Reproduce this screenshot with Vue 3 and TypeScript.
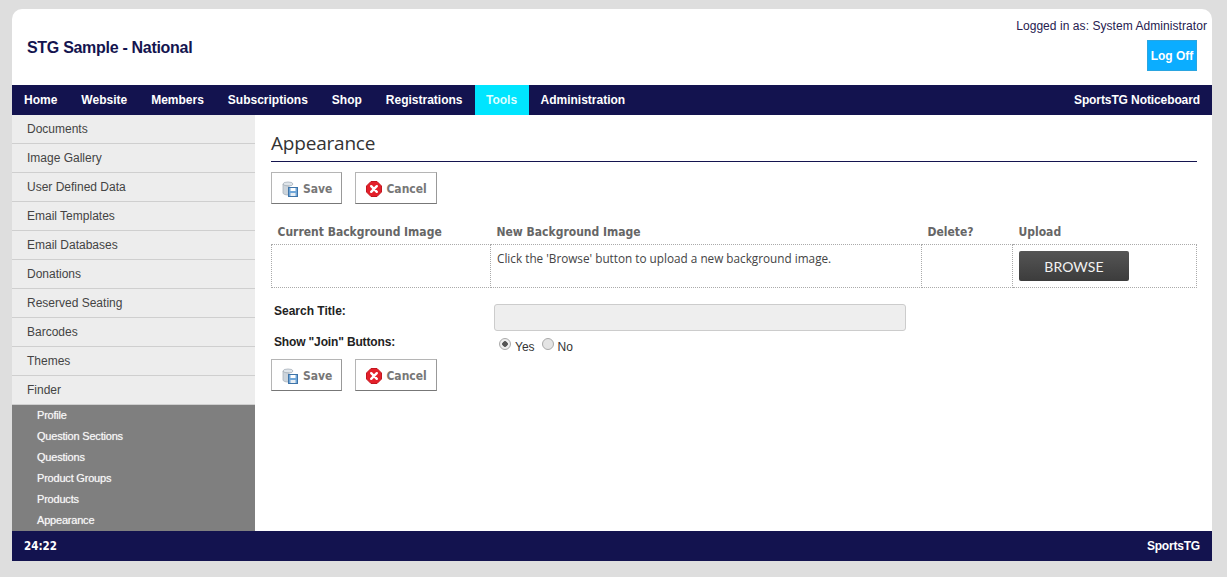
<script setup lang="ts">
const nav = [
  { label: 'Home', active: false },
  { label: 'Website', active: false },
  { label: 'Members', active: false },
  { label: 'Subscriptions', active: false },
  { label: 'Shop', active: false },
  { label: 'Registrations', active: false },
  { label: 'Tools', active: true },
  { label: 'Administration', active: false },
]
const side = ['Documents', 'Image Gallery', 'User Defined Data', 'Email Templates', 'Email Databases', 'Donations', 'Reserved Seating', 'Barcodes', 'Themes', 'Finder']
const sub = ['Profile', 'Question Sections', 'Questions', 'Product Groups', 'Products', 'Appearance']
</script>

<template>
  <div class="shell">
    <header class="top">
      <div class="brand">STG Sample - National</div>
      <div class="user">
        <div class="logged">Logged in as: System Administrator</div>
        <button class="logoff">Log Off</button>
      </div>
    </header>
    <nav class="nav">
      <div class="nav-items">
        <a v-for="n in nav" :key="n.label" class="nav-item" :class="{ active: n.active }">{{ n.label }}</a>
      </div>
      <a class="notice">SportsTG Noticeboard</a>
    </nav>
    <div class="body">
      <aside class="side">
        <a v-for="s in side" :key="s" class="side-item">{{ s }}</a>
        <div class="sub">
          <a v-for="s in sub" :key="s" class="sub-item">{{ s }}</a>
        </div>
      </aside>
      <main class="main">
        <h1 class="title">Appearance</h1>
        <div class="actions">
          <button class="btn">
            <svg class="ico" viewBox="0 0 16 16" width="16" height="16">
              <ellipse cx="6" cy="3" rx="5" ry="2" fill="#dfe5ea" stroke="#aab3bb" stroke-width=".8" />
              <path d="M1 3v9c0 1.100 2.200 2 5 2h1V5c-3 0-6-.9-6-2z" fill="#ccd4db" stroke="#aab3bb" stroke-width=".8" />
              <rect x="6.500" y="6.500" width="9" height="9" fill="#6fa6d8" stroke="#3f74a8" />
              <rect x="8.500" y="7" width="5" height="3" fill="#fff" />
              <rect x="8.500" y="12" width="5" height="3" fill="#e8eef3" />
            </svg>
            Save
          </button>
          <button class="btn cancel">
            <svg class="ico" viewBox="0 0 16 16" width="16" height="16">
              <path d="M5 .5h6L15.500 5v6L11 15.500H5L.5 11V5z" fill="#e3202a" stroke="#c2161f" stroke-linejoin="round" />
              <path d="M5.200 5.200l5.600 5.600M10.800 5.200l-5.600 5.600" stroke="#fff" stroke-width="2.400" stroke-linecap="round" />
            </svg>
            Cancel
          </button>
        </div>
        <table class="grid">
          <thead>
            <tr>
              <th class="c1">Current Background Image</th>
              <th class="c2">New Background Image</th>
              <th class="c3">Delete?</th>
              <th class="c4">Upload</th>
            </tr>
          </thead>
          <tbody>
            <tr>
              <td></td>
              <td class="hint">Click the 'Browse' button to upload a new background image.</td>
              <td></td>
              <td class="upload"><button class="browse">BROWSE</button></td>
            </tr>
          </tbody>
        </table>
        <div class="form">
          <div class="labels">
            <div class="lab first">Search Title:</div>
            <div class="lab join">Show "Join" Buttons:</div>
          </div>
          <div class="fields">
            <input class="field" type="text" disabled />
            <div class="radios">
              <span class="radio on"></span><span class="opt yes">Yes</span>
              <span class="radio"></span><span class="opt">No</span>
            </div>
          </div>
        </div>
        <div class="actions second">
          <button class="btn">
            <svg class="ico" viewBox="0 0 16 16" width="16" height="16">
              <ellipse cx="6" cy="3" rx="5" ry="2" fill="#dfe5ea" stroke="#aab3bb" stroke-width=".8" />
              <path d="M1 3v9c0 1.100 2.200 2 5 2h1V5c-3 0-6-.9-6-2z" fill="#ccd4db" stroke="#aab3bb" stroke-width=".8" />
              <rect x="6.500" y="6.500" width="9" height="9" fill="#6fa6d8" stroke="#3f74a8" />
              <rect x="8.500" y="7" width="5" height="3" fill="#fff" />
              <rect x="8.500" y="12" width="5" height="3" fill="#e8eef3" />
            </svg>
            Save
          </button>
          <button class="btn cancel">
            <svg class="ico" viewBox="0 0 16 16" width="16" height="16">
              <path d="M5 .5h6L15.500 5v6L11 15.500H5L.5 11V5z" fill="#e3202a" stroke="#c2161f" stroke-linejoin="round" />
              <path d="M5.200 5.200l5.600 5.600M10.800 5.200l-5.600 5.600" stroke="#fff" stroke-width="2.400" stroke-linecap="round" />
            </svg>
            Cancel
          </button>
        </div>
      </main>
    </div>
    <footer class="foot">
      <span class="time">24:22</span>
      <span class="foot-brand">SportsTG</span>
    </footer>
  </div>
</template>

<style>
html, body { margin: 0; background: #dedede; }
</style>

<style scoped>
.shell {
  box-sizing: border-box;
  width: 1200px;
  height: 552px;
  margin: 9px 0 16px 12px;
  display: flex;
  flex-direction: column;
  background: #fff;
  border-radius: 10px 10px 0 0;
  font-family: "Liberation Sans", Arial, sans-serif;
  overflow: hidden;
}
.top { height: 76px; flex: none; display: flex; justify-content: space-between; }
.brand { margin: 29px 0 0 15px; font-size: 16px; letter-spacing: -.3px; line-height: 19px; font-weight: bold; color: #14144f; }
.user { display: flex; flex-direction: column; align-items: flex-end; padding: 10px 5px 0 0; }
.logged { font-size: 12px; line-height: 15px; color: #26204f; letter-spacing: .06px; }
.logoff {
  box-sizing: border-box; width: 50px; height: 31px; margin: 6px 10px 0 0; padding: 0; border: 1px solid #2aa5e0;
  background: #0badff; color: #fff; font: bold 12px "Liberation Sans", Arial, sans-serif;
}
.nav { height: 30px; flex: none; background: #13134f; display: flex; justify-content: space-between; font-size: 12px; font-weight: bold; color: #fff; line-height: 30px; }
.nav-items { display: flex; }
.nav-item { padding: 0 12px; }
.nav-item.active { width: 54px; padding: 0; text-align: center; background: #00e5ff; color: #dff; }
.notice { padding-right: 12px; letter-spacing: -.1px; }
.body { flex: 1; display: flex; min-height: 0; }
.side { width: 243px; flex: none; background: #ededed; display: flex; flex-direction: column; }
.side-item { box-sizing: border-box; height: 29px; padding: 7px 0 0 15px; font-size: 12px; line-height: 14px; color: #444; border-bottom: 1px solid #cfcfcf; }
.sub { flex: 1; background: #7f7f7f; }
.sub-item { display: block; height: 21px; padding-left: 25px; font-size: 11px; letter-spacing: -.2px; line-height: 21px; color: #f8f8f8; text-shadow: 0 0 1px rgba(255, 255, 255, .6); }
.main { flex: 1; min-width: 0; padding: 0 15px 0 16px; }
.title { margin: 0; height: 47px; box-sizing: border-box; padding-top: 13px; font: normal 19px/30px "Open Sans", sans-serif; letter-spacing: -.2px; color: #333; border-bottom: 1px solid #14144f; }
.actions { display: flex; gap: 13px; margin-top: 10px; }
.actions.second { margin-top: 5px; }
.btn {
  box-sizing: border-box; height: 32px; padding: 2px 9px 0 10px; display: flex; align-items: center; gap: 5px;
  background: #fff; border: 1px solid #b5b5b5; border-bottom-color: #777; border-right-color: #999;
  font: bold 12px "DejaVu Sans Condensed", "DejaVu Sans", Verdana, sans-serif; font-stretch: condensed; color: #777;
}
.btn.cancel { gap: 4px; }
.ico { flex: none; margin-top: -1px; }
.grid { width: 926px; margin-top: 16px; border-collapse: collapse; table-layout: fixed; font-family: "DejaVu Sans Condensed", "DejaVu Sans", Verdana, sans-serif; font-stretch: condensed; }
.grid th { height: 24px; padding: 0 0 0 6px; text-align: left; font-size: 12px; font-weight: bold; color: #666; }
.c1 { width: 213px; }
.c2 { width: 425px; }
.c3 { width: 85px; }
.grid td { height: 43px; padding: 0; border: 1px dotted #aaa; vertical-align: top; box-sizing: border-box; }
.grid .hint { padding: 5px 0 0 6px; font: 11.75px/16px "Open Sans", sans-serif; font-stretch: normal; color: #444; }
.grid .upload { padding: 6px 0 0 6px; }
.browse {
  display: block; width: 110px; height: 30px; padding: 0; border: 0; border-radius: 2px;
  background: linear-gradient(#555, #3c3c3c); color: #f2f2f2; font: 14px "Lato", sans-serif; letter-spacing: .1px;
}
.form { display: flex; margin-top: 16px; }
.labels { width: 223px; flex: none; }
.lab { font-size: 12px; font-weight: bold; color: #222; line-height: 15px; padding-left: 3px; }
.lab.first { margin-bottom: 16px; }
.lab.join { letter-spacing: -.15px; }
.fields { display: flex; flex-direction: column; }
.field { box-sizing: border-box; width: 412px; height: 27px; margin: 0; background: #eee; border: 1px solid #ccc; border-radius: 3px; }
.radios { display: flex; align-items: flex-start; margin: 7px 0 0 5px; font-size: 12px; line-height: 15px; color: #333; height: 16px; }
.radio { box-sizing: border-box; width: 12px; height: 12px; border-radius: 50%; border: 1px solid #aaa; background: #e4e4e4; }
.radio.on { background: radial-gradient(circle, #555 0 2.500px, #eee 3px); }
.opt { margin-left: 4px; margin-top: 2px; }
.opt.yes { margin-right: 7px; }
.foot { height: 30px; flex: none; background: #13134f; color: #fff; display: flex; justify-content: space-between; padding: 0 12px; font-size: 12px; font-weight: bold; line-height: 30px; }
.time { font-family: "DejaVu Sans Condensed", "DejaVu Sans", sans-serif; font-stretch: condensed; font-size: 11.5px; }
.foot-brand { letter-spacing: -.2px; }
</style>
